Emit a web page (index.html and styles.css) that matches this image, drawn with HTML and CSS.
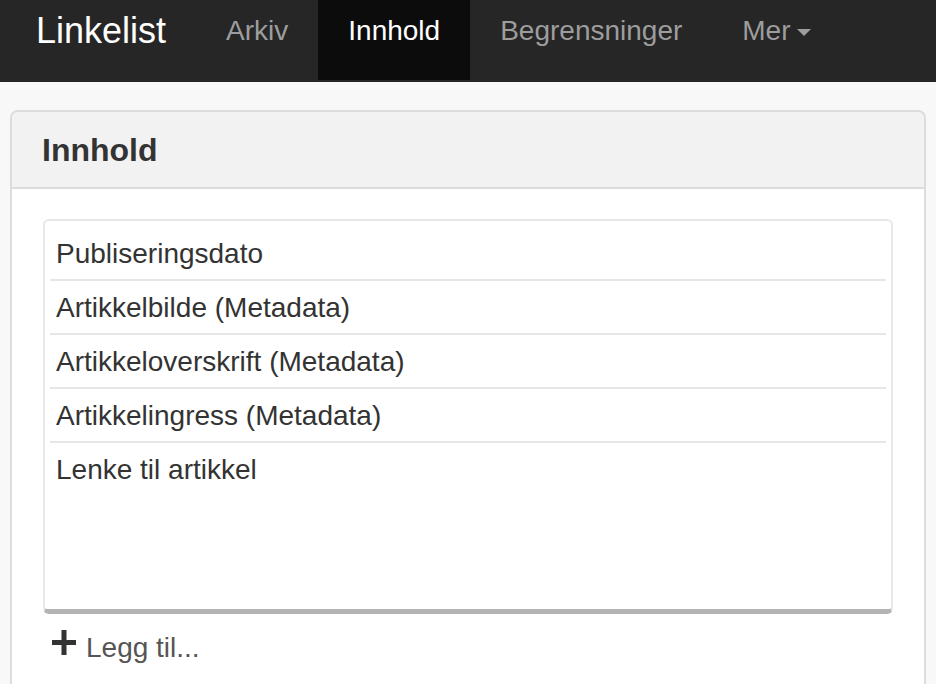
FILE: index.html
```html
<!DOCTYPE html>
<html lang="no">
<head>
<meta charset="utf-8">
<title>Linkelist</title>
<link rel="stylesheet" href="styles.css">
</head>
<body>
<nav class="navbar">
  <a class="brand" href="#">Linkelist</a>
  <ul class="nav">
    <li><a href="#">Arkiv</a></li>
    <li class="active"><a href="#">Innhold</a></li>
    <li><a href="#">Begrensninger</a></li>
    <li><a href="#">Mer<span class="caret"></span></a></li>
  </ul>
</nav>
<main class="page">
  <section class="panel">
    <div class="panel-heading"><h3 class="panel-title">Innhold</h3></div>
    <div class="panel-body">
      <ul class="field-list">
        <li>Publiseringsdato</li>
        <li>Artikkelbilde (Metadata)</li>
        <li>Artikkeloverskrift (Metadata)</li>
        <li>Artikkelingress (Metadata)</li>
        <li>Lenke til artikkel</li>
      </ul>
      <a class="add-link" href="#"><svg class="plus" width="24" height="25" viewBox="0 0 24 25"><rect x="9.5" y="0" width="5" height="25" fill="#333"/><rect x="0" y="10" width="24" height="5" fill="#333"/></svg>Legg til...</a>
    </div>
  </section>
</main>
</body>
</html>
```
FILE: styles.css
```css
* { box-sizing: border-box; }
html, body { margin: 0; padding: 0; }
body {
  background: #f8f8f8;
  font-family: "Liberation Sans", Arial, sans-serif;
  color: #333;
  height: 684px;
  overflow: hidden;
}
a { text-decoration: none; }

.navbar {
  display: flex;
  align-items: flex-start;
  height: 82px;
  background: #262626;
  padding-left: 6px;
}
.brand {
  color: #fff;
  font-size: 36px;
  line-height: 40px;
  padding: 11px 30px 29px;
  height: 80px;
}
.nav {
  display: flex;
  list-style: none;
  margin: 0;
  padding: 0;
}
.nav a {
  display: flex;
  align-items: flex-start;
  height: 80px;
  padding: 11px 30px 29px;
  font-size: 28px;
  line-height: 40px;
  color: #9d9d9d;
}
.nav .active a {
  background: #0c0c0c;
  color: #fff;
}
.caret {
  display: inline-block;
  width: 0;
  height: 0;
  margin: 18px 0 0 6px;
  border-top: 7px solid #9d9d9d;
  border-left: 7px solid transparent;
  border-right: 7px solid transparent;
}

.page {
  height: 602px;
  padding: 28px 10px 0;
  overflow: hidden;
}
.panel {
  background: #fff;
  border: 2px solid #dcdcdc;
  border-bottom: none;
  border-radius: 8px 8px 0 0;
  height: 574px;
}
.panel-heading {
  background: #f2f2f2;
  border-bottom: 2px solid #dcdcdc;
  border-radius: 6px 6px 0 0;
  padding: 21px 30px 19px;
}
.panel-title {
  margin: 0;
  font-size: 32px;
  line-height: 35px;
  font-weight: bold;
  color: #333;
}
.panel-body {
  padding: 30px 31px;
}
.field-list {
  list-style: none;
  margin: 0;
  padding: 7px 5px 0;
  height: 395px;
  border: 2px solid #e8e8e8;
  border-bottom: 5px solid #b4b4b4;
  border-radius: 6px;
}
.field-list li {
  height: 54px;
  padding: 1px 6px 0;
  font-size: 28px;
  line-height: 51px;
  color: #333;
  border-bottom: 2px solid #e6e6e6;
}
.field-list li:first-child {
  height: 53px;
  padding-top: 0;
}
.field-list li:last-child {
  border-bottom: none;
}
.add-link {
  display: inline-flex;
  align-items: flex-start;
  margin: 14px 0 0 9px;
  font-size: 28px;
  line-height: 40px;
  color: #555;
}
.plus {
  margin: 2px 10px 0 0;
}
```
